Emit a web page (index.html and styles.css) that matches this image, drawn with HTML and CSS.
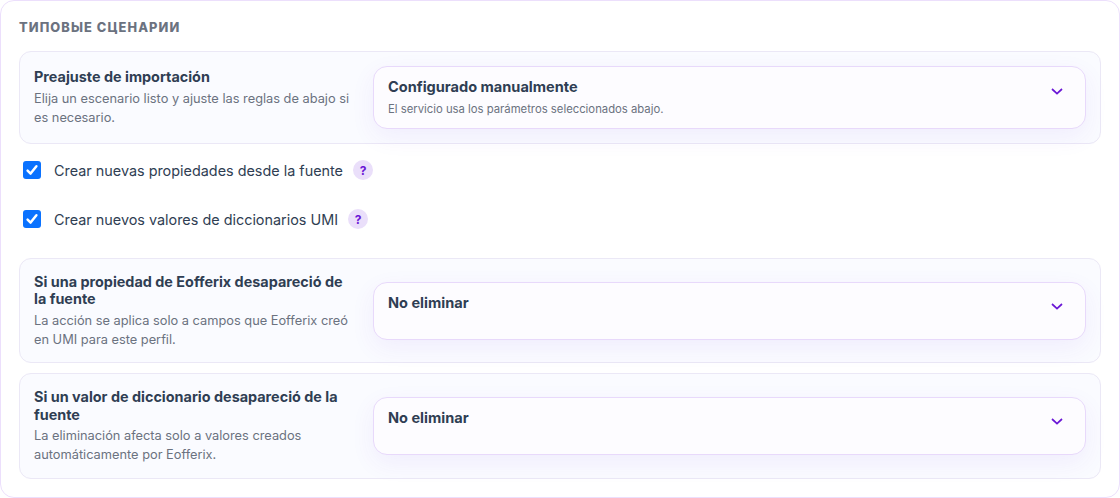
FILE: index.html
```html
<!DOCTYPE html>
<html>
  <head>
    <title>Типовые сценарии</title>
    <link rel="stylesheet" href="styles.css">
  </head>
  <body>
    <section class="panel">
      <h2 class="panel-title">Типовые сценарии</h2>

      <div class="rule rule-first">
        <div class="rule-text">
          <div class="rule-name">Preajuste de importación</div>
          <div class="rule-hint">Elija un escenario listo y ajuste las reglas de abajo si es necesario.</div>
        </div>
        <div class="picker picker-tall">
          <div>
            <div class="picker-value">Configurado manualmente</div>
            <div class="picker-note">El servicio usa los parámetros seleccionados abajo.</div>
          </div>
          <svg class="chevron" viewBox="0 0 12 7" width="12" height="7"><path d="M1 1l5 4.6L11 1" fill="none" stroke="#6a16d6" stroke-width="1.7"/></svg>
        </div>
      </div>

      <label class="check check-first">
        <input type="checkbox" checked>
        <span>Crear nuevas propiedades desde la fuente</span>
        <span class="help">?</span>
      </label>
      <label class="check">
        <input type="checkbox" checked>
        <span>Crear nuevos valores de diccionarios UMI</span>
        <span class="help">?</span>
      </label>

      <div class="rule rule-gap">
        <div class="rule-text">
          <div class="rule-name">Si una propiedad de Eofferix desapareció de la fuente</div>
          <div class="rule-hint">La acción se aplica solo a campos que Eofferix creó en UMI para este perfil.</div>
        </div>
        <div class="picker">
          <div class="picker-value">No eliminar</div>
          <svg class="chevron" viewBox="0 0 12 7" width="12" height="7"><path d="M1 1l5 4.6L11 1" fill="none" stroke="#6a16d6" stroke-width="1.7"/></svg>
        </div>
      </div>

      <div class="rule rule-next">
        <div class="rule-text">
          <div class="rule-name">Si un valor de diccionario desapareció de la fuente</div>
          <div class="rule-hint">La eliminación afecta solo a valores creados automáticamente por Eofferix.</div>
        </div>
        <div class="picker">
          <div class="picker-value">No eliminar</div>
          <svg class="chevron" viewBox="0 0 12 7" width="12" height="7"><path d="M1 1l5 4.6L11 1" fill="none" stroke="#6a16d6" stroke-width="1.7"/></svg>
        </div>
      </div>
    </section>
  </body>
</html>
```

FILE: styles.css
```css
* {
  box-sizing: border-box;
}

body {
  margin: 0;
  background: #fff;
  font-family: Inter, "Liberation Sans", sans-serif;
  color: #2f3e53;
}

.panel {
  width: 1120px;
  height: 498px;
  padding: 18px 18px 0;
  background: #fff;
  border: 1px solid #ecdffc;
  border-radius: 14px;
}

.panel-title {
  margin: 0 0 15px;
  font-size: 12.8px;
  line-height: 17px;
  font-weight: 800;
  letter-spacing: 1.1px;
  text-transform: uppercase;
  color: #6b7280;
}

.rule {
  display: grid;
  grid-template-columns: 323px 1fr;
  column-gap: 16px;
  align-items: center;
  padding: 14px;
  background: #fafbff;
  border: 1px solid #ebe8f6;
  border-radius: 12px;
}

.rule-gap {
  margin-top: 24px;
}

.rule-next {
  margin-top: 10px;
}

.rule-name {
  font-size: 14.4px;
  line-height: 1.2;
  font-weight: 700;
  color: #2f3e53;
}

.rule-hint {
  margin: 3.4px 0 -1px;
  font-size: 12.8px;
  line-height: 1.5;
  color: #6b7280;
}

.picker {
  display: flex;
  justify-content: space-between;
  height: 58px;
  padding: 11px 22px 0 14px;
  background: #fdfcff;
  border: 1px solid #e8d9fb;
  border-radius: 14px;
  box-shadow: 0 8px 24px rgba(120, 60, 220, 0.07);
}

.picker-tall {
  height: 63px;
}

.picker-tall .chevron {
  margin-top: 10px;
}

.picker-value {
  font-size: 14.56px;
  line-height: 19px;
  font-weight: 700;
  color: #2f3e53;
}

.picker-note {
  margin-top: 4px;
  font-size: 11.3px;
  line-height: 16px;
  color: #6b7280;
}

.chevron {
  margin-top: 9px;
}

.check {
  display: flex;
  align-items: center;
  height: 30px;
  margin-top: 19px;
  padding-left: 4px;
  font-size: 14.4px;
  color: #2f3e53;
}

.check-first {
  margin-top: 11px;
}

.check input {
  appearance: none;
  width: 18px;
  height: 18px;
  margin: 0 13px 0 0;
  border-radius: 3px;
  background: #0a72ff url("data:image/svg+xml,%3Csvg xmlns='http://www.w3.org/2000/svg' viewBox='0 0 18 18'%3E%3Cpath d='M4.6 9.6l3 3 5.8-7.4' fill='none' stroke='%23fff' stroke-width='2.5' stroke-linecap='round' stroke-linejoin='round'/%3E%3C/svg%3E") center no-repeat;
}

.help {
  display: flex;
  align-items: center;
  justify-content: center;
  width: 20px;
  height: 20px;
  margin-left: 10px;
  border-radius: 50%;
  background: #eadffa;
  color: #6a16d6;
  font-size: 12px;
  font-weight: 700;
}
```
